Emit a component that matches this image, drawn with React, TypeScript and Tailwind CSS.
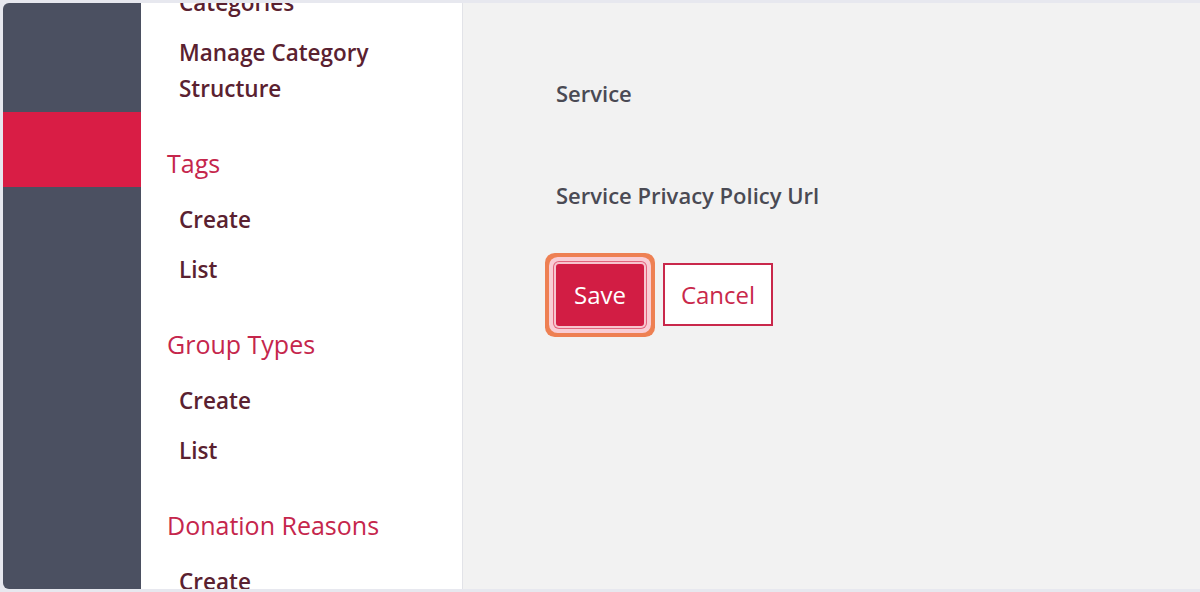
const sections = [
  { title: null, items: ['Categories', 'Manage Category Structure'] },
  { title: 'Tags', items: ['Create', 'List'] },
  { title: 'Group Types', items: ['Create', 'List'] },
  { title: 'Donation Reasons', items: ['Create', 'List'] },
];

function NavPanel() {
  return (
    <div className="w-[322px] shrink-0 overflow-hidden border-r border-[#e2e3e8] bg-white">
      <div className="-mt-[26px] pl-[26px] pr-4">
        {sections.map((section, i) => (
          <div key={i}>
            {section.title && (
              <div className="mt-[32px] mb-[13px] text-[25px] leading-[36px] text-[#c5264c]">
                {section.title}
              </div>
            )}
            {section.items.map((item) => (
              <div
                key={item}
                className="pt-[8px] pb-[6px] pl-[12px] text-[22.5px] font-semibold leading-[36px] text-[#5a2130]"
              >
                {item === 'Manage Category Structure' ? (
                  <>
                    Manage Category
                    <br />
                    Structure
                  </>
                ) : (
                  item
                )}
              </div>
            ))}
          </div>
        ))}
      </div>
    </div>
  );
}

export default function App() {
  return (
    <div
      className="flex h-[592px] w-[1200px] bg-[#e7e8ef] py-[3px] pl-[3px]"
      style={{ fontFamily: '"Open Sans", "Noto Sans", sans-serif' }}
    >
      <div className="flex flex-1 overflow-hidden rounded-l-md">
        {/* icon rail */}
        <div className="flex w-[138px] shrink-0 flex-col bg-[#4b5061]">
          <div className="h-[109px]" />
          <div className="h-[75px] bg-[#d91d45]" />
        </div>

        <NavPanel />

        {/* form */}
        <div className="flex-1 bg-[#f2f2f2] pl-[93px] pt-[75px]">
          <div className="text-[22px] font-semibold leading-[30px] text-[#4a4a54]">Service</div>
          <div className="mt-[72px] text-[22px] font-semibold leading-[30px] text-[#4a4a54]">
            Service Privacy Policy Url
          </div>
          <div className="mt-[54px] flex items-start gap-[19px]">
            <button className="h-[62px] w-[88px] rounded-[3px] bg-[#d21d44] text-[24px] text-white shadow-[0_0_0_2px_#f7c5cf,0_0_0_3px_#e2637c,0_0_0_7px_#f9cdd5,0_0_0_11px_#ee8053]">
              Save
            </button>
            <button className="-mt-px h-[63px] w-[110px] border-2 border-[#c9284b] bg-white text-[24px] text-[#c9284b]">
              Cancel
            </button>
          </div>
        </div>
      </div>
    </div>
  );
}
